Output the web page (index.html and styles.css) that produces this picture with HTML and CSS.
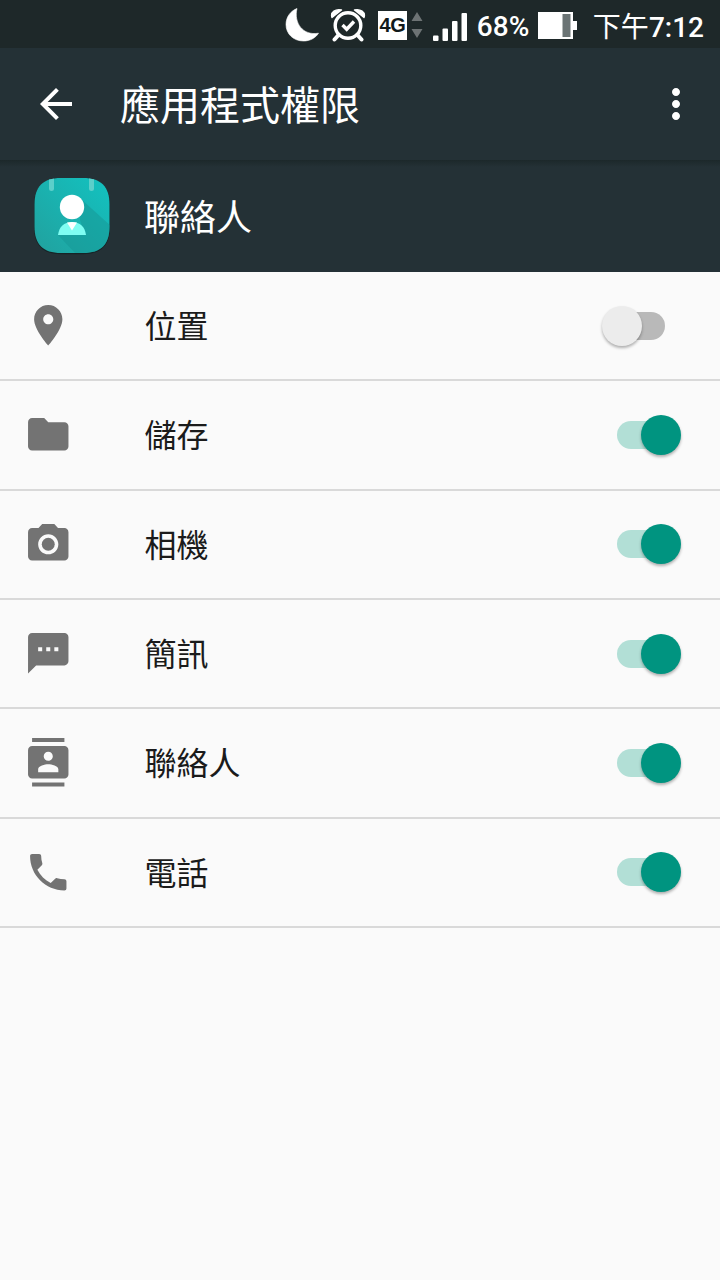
FILE: index.html
```html
<!DOCTYPE html>
<html lang="zh-Hant">
  <head>
    <meta charset="UTF-8">
    <meta name="viewport" content="width=device-width, initial-scale=1.0">
    <title>應用程式權限</title>
    <link rel="stylesheet" href="styles.css">
  </head>
  <body>
    <div class="status-bar">
      <svg class="moon" width="34" height="34" viewBox="0 0 34 34">
        <path d="M12 .5C8.500 15 18 28 33.500 25.200C30.500 30 25 33 18.500 33C8.500 33 1 26 1 16.500C1 9 5.500 3 12 .5z" fill="#fff" stroke="#fff" stroke-width=".6" stroke-linejoin="round"/>
      </svg>
      <svg class="alarm" width="36" height="34" viewBox="0 0 36 34">
        <circle cx="18" cy="17.500" r="12.800" fill="none" stroke="#fff" stroke-width="3.400"/>
        <path d="M12.500 17l4.200 4.200 7.300-7.700" fill="none" stroke="#fff" stroke-width="3.400"/>
        <path d="M8.500 27l-4 4.500M27.500 27l4 4.500" fill="none" stroke="#fff" stroke-width="4" stroke-linecap="round"/>
        <path d="M2 9.500C0 4 6 .5 11.500 2zM34 9.500C36 4 30 .5 24.500 2z" fill="#fff" stroke="#fff" stroke-width="1.400" stroke-linejoin="round"/>
      </svg>
      <div class="network">4G</div>
      <svg class="arrows" width="12" height="26" viewBox="0 0 12 26">
        <path d="M6 0l5.500 9H.5zM6 26l5.500-9H.5z" fill="#6d7374"/>
      </svg>
      <svg class="signal" width="34" height="29" viewBox="0 0 34 29" fill="#fff">
        <rect x="0" y="23.500" width="5.500" height="5.500" rx="1"/>
        <rect x="9.500" y="16.500" width="5.500" height="12.500" rx="1"/>
        <rect x="19" y="9" width="5.500" height="20" rx="1"/>
        <rect x="28.500" y="1" width="5.500" height="28" rx="1"/>
      </svg>
      <span class="percent">68%</span>
      <svg class="battery" width="39" height="27" viewBox="0 0 39 27">
        <path d="M0 0h35v9h4v9h-4v9H0z" fill="#fff"/>
        <path d="M24.500 2h8v23h-8z" fill="#6b7475"/>
      </svg>
      <span class="time">下午<b>7:12</b></span>
    </div>

    <div class="toolbar">
      <svg class="back" width="48" height="48" viewBox="0 0 24 24">
        <path d="M20 11H7.830l5.590-5.590L12 4l-8 8 8 8 1.410-1.410L7.830 13H20v-2z"/>
      </svg>
      <h1>應用程式權限</h1>
      <svg class="more" width="48" height="48" viewBox="0 0 24 24">
        <path d="M12 8c1.100 0 2-.9 2-2s-.9-2-2-2-2 .9-2 2 .9 2 2 2zm0 2c-1.100 0-2 .9-2 2s.9 2 2 2 2-.9 2-2-.9-2-2-2zm0 6c-1.100 0-2 .9-2 2s.9 2 2 2 2-.9 2-2-.9-2-2-2z"/>
      </svg>
    </div>

    <div class="app-header">
      <svg class="app-icon" width="78" height="80" viewBox="0 0 78 80">
        <defs>
          <linearGradient id="tile" x1="1" y1="0" x2="0" y2="1">
            <stop offset="0" stop-color="#12c3c1"/>
            <stop offset="1" stop-color="#22a09d"/>
          </linearGradient>
          <clipPath id="clip">
            <path d="M28 2H50C68 2 76.500 10.500 76.500 28.500V50.500C76.500 68.500 68 77 50 77H28C10 77 1.500 68.500 1.500 50.500V28.500C1.500 10.500 10 2 28 2z"/>
          </clipPath>
        </defs>
        <path d="M28 3H50C68 3 77 11.500 77 29.500V51.500C77 69.500 68 78.200 50 78.200H28C10 78.200 1 69.500 1 51.500V29.500C1 11.500 10 3 28 3z" fill="#172426"/>
        <g clip-path="url(#clip)">
          <path d="M0 0h78v80H0z" fill="url(#tile)"/>
          <path d="M48 23l32 29v28H45L25 59l27 0-5-15z" fill="#159694" opacity=".5"/>
          <path d="M16 0h5v12.500a2.500 2.500 0 0 1-5 0zM56 0h5v12.500a2.500 2.500 0 0 1-5 0z" fill="#5ccfca"/>
        </g>
        <circle cx="39" cy="31" r="12.200" fill="#fff"/>
        <path d="M25 59C26 51 31 46 39 46s13 5 14 13z" fill="#7ffdf2"/>
        <path d="M34 46.500q5-1 10 0L39 54.500z" fill="#fff"/>
      </svg>
      <h2>聯絡人</h2>
    </div>

    <div class="permissions">
      <div class="row">
        <svg class="icon" viewBox="0 0 24 24"><path d="M12 2C8.130 2 5 5.130 5 9c0 5.250 7 13 7 13s7-7.750 7-13c0-3.870-3.130-7-7-7zm0 9.500c-1.380 0-2.500-1.120-2.500-2.500s1.120-2.500 2.500-2.500 2.500 1.120 2.500 2.500-1.120 2.500-2.500 2.500z"/></svg>
        <span class="label">位置</span>
        <div class="switch"><div class="thumb"></div></div>
      </div>
      <div class="row">
        <svg class="icon" viewBox="0 0 24 24"><path d="M10 4H4c-1.100 0-1.990.9-1.990 2L2 18c0 1.100.9 2 2 2h16c1.100 0 2-.9 2-2V8c0-1.100-.9-2-2-2h-8l-2-2z"/></svg>
        <span class="label">儲存</span>
        <div class="switch on"><div class="thumb"></div></div>
      </div>
      <div class="row">
        <svg class="icon" viewBox="0 0 24 24"><circle cx="12" cy="12" r="3.200"/><path d="M9 2L7.170 4H4c-1.100 0-2 .9-2 2v12c0 1.100.9 2 2 2h16c1.100 0 2-.9 2-2V6c0-1.100-.9-2-2-2h-3.170L15 2H9zm3 15c-2.760 0-5-2.240-5-5s2.240-5 5-5 5 2.240 5 5-2.240 5-5 5z"/></svg>
        <span class="label">相機</span>
        <div class="switch on"><div class="thumb"></div></div>
      </div>
      <div class="row">
        <svg class="icon" viewBox="0 0 24 24"><path d="M20 2H4c-1.100 0-1.990.9-1.990 2L2 22l4-4h14c1.100 0 2-.9 2-2V4c0-1.100-.9-2-2-2zM9 11H7V9h2v2zm4 0h-2V9h2v2zm4 0h-2V9h2v2z"/></svg>
        <span class="label">簡訊</span>
        <div class="switch on"><div class="thumb"></div></div>
      </div>
      <div class="row">
        <svg class="icon" viewBox="0 0 24 24"><path d="M20 0H4v2h16V0zM4 24h16v-2H4v2zM20 4H4c-1.100 0-2 .9-2 2v12c0 1.100.9 2 2 2h16c1.100 0 2-.9 2-2V6c0-1.100-.9-2-2-2zm-8 2.750c1.240 0 2.250 1.010 2.250 2.250s-1.010 2.250-2.250 2.250S9.750 10.240 9.750 9 10.760 6.750 12 6.750zM17 17H7v-1.500c0-1.670 3.330-2.500 5-2.500s5 .83 5 2.500V17z"/></svg>
        <span class="label">聯絡人</span>
        <div class="switch on"><div class="thumb"></div></div>
      </div>
      <div class="row">
        <svg class="icon" viewBox="0 0 24 24"><path d="M6.620 10.790c1.440 2.830 3.760 5.140 6.590 6.590l2.200-2.200c.27-.27.67-.36 1.020-.24 1.120.37 2.330.57 3.570.57.55 0 1 .45 1 1V20c0 .55-.45 1-1 1-9.390 0-17-7.610-17-17 0-.55.45-1 1-1h3.500c.55 0 1 .45 1 1 0 1.250.2 2.450.57 3.570.11.35.03.74-.25 1.020l-2.200 2.200z"/></svg>
        <span class="label">電話</span>
        <div class="switch on"><div class="thumb"></div></div>
      </div>
    </div>
  </body>
</html>
```
FILE: styles.css
```css
* {
  box-sizing: border-box;
}

body {
  margin: 0;
  min-height: 100vh;
  background-color: #fafafa;
  color: #1b1b1b;
  font-family: Roboto, "Noto Sans CJK TC", sans-serif;
}

svg {
  display: block;
  flex: none;
}

h1, h2 {
  margin: 0;
  font-weight: 400;
  color: #fff;
}

/* status bar */
.status-bar {
  display: flex;
  align-items: center;
  height: 48px;
  padding: 2px 16px 0 285px;
  background-color: #1e2829;
  color: #fff;
  white-space: nowrap;
}

.alarm {
  margin-left: 11px;
}

.network {
  width: 29px;
  height: 29px;
  margin-left: 12px;
  background-color: #fff;
  color: #11191a;
  font: 700 20px/29px "Liberation Sans", sans-serif;
  letter-spacing: -0.5px;
  text-align: center;
}

.arrows {
  margin-left: 4px;
}

.signal {
  margin: 3px 0 0 10px;
}

.percent {
  width: 52px;
  margin: 2px 0 0 10px;
  font-size: 28px;
  font-weight: 500;
}

.battery {
  margin-left: 9px;
}

.time {
  margin-left: 16px;
  font-size: 28px;
}

.time b {
  font-weight: 500;
}

/* toolbar */
.toolbar {
  display: flex;
  align-items: center;
  height: 112px;
  padding: 0 20px 0 32px;
  background-color: #243136;
  fill: #fff;
}

.toolbar h1 {
  flex: 1;
  margin: 0 0 3px 40px;
  font-size: 40px;
}

.app-header {
  display: flex;
  align-items: center;
  height: 112px;
  padding-left: 33px;
  background: linear-gradient(#1c282a, #243136 7px);
}

.app-header h2 {
  margin: 0 0 3px 33px;
  font-size: 36px;
}

/* list */
.row {
  display: flex;
  align-items: center;
  height: 109.33px;
  padding: 0 55px 0 24px;
  border-bottom: 2px solid #d9d9d9;
}

.icon {
  width: 48.500px;
  height: 48.500px;
  margin-top: -1px;
  fill: #737373;
}

.label {
  flex: 1;
  margin: 0 0 3px 72px;
  font-size: 32px;
}

.switch {
  display: flex;
  align-items: center;
  width: 48px;
  height: 28px;
  border-radius: 14px;
  background-color: #b9b9b9;
}

.thumb {
  flex: none;
  width: 40px;
  height: 40px;
  margin-left: -15.500px;
  border-radius: 50%;
  background-color: #ececec;
  box-shadow: 0 2px 3px rgba(0, 0, 0, 0.3);
}

.switch.on {
  background-color: #b2dfd6;
}

.switch.on .thumb {
  margin-left: 24px;
  background-color: #009480;
}
```
